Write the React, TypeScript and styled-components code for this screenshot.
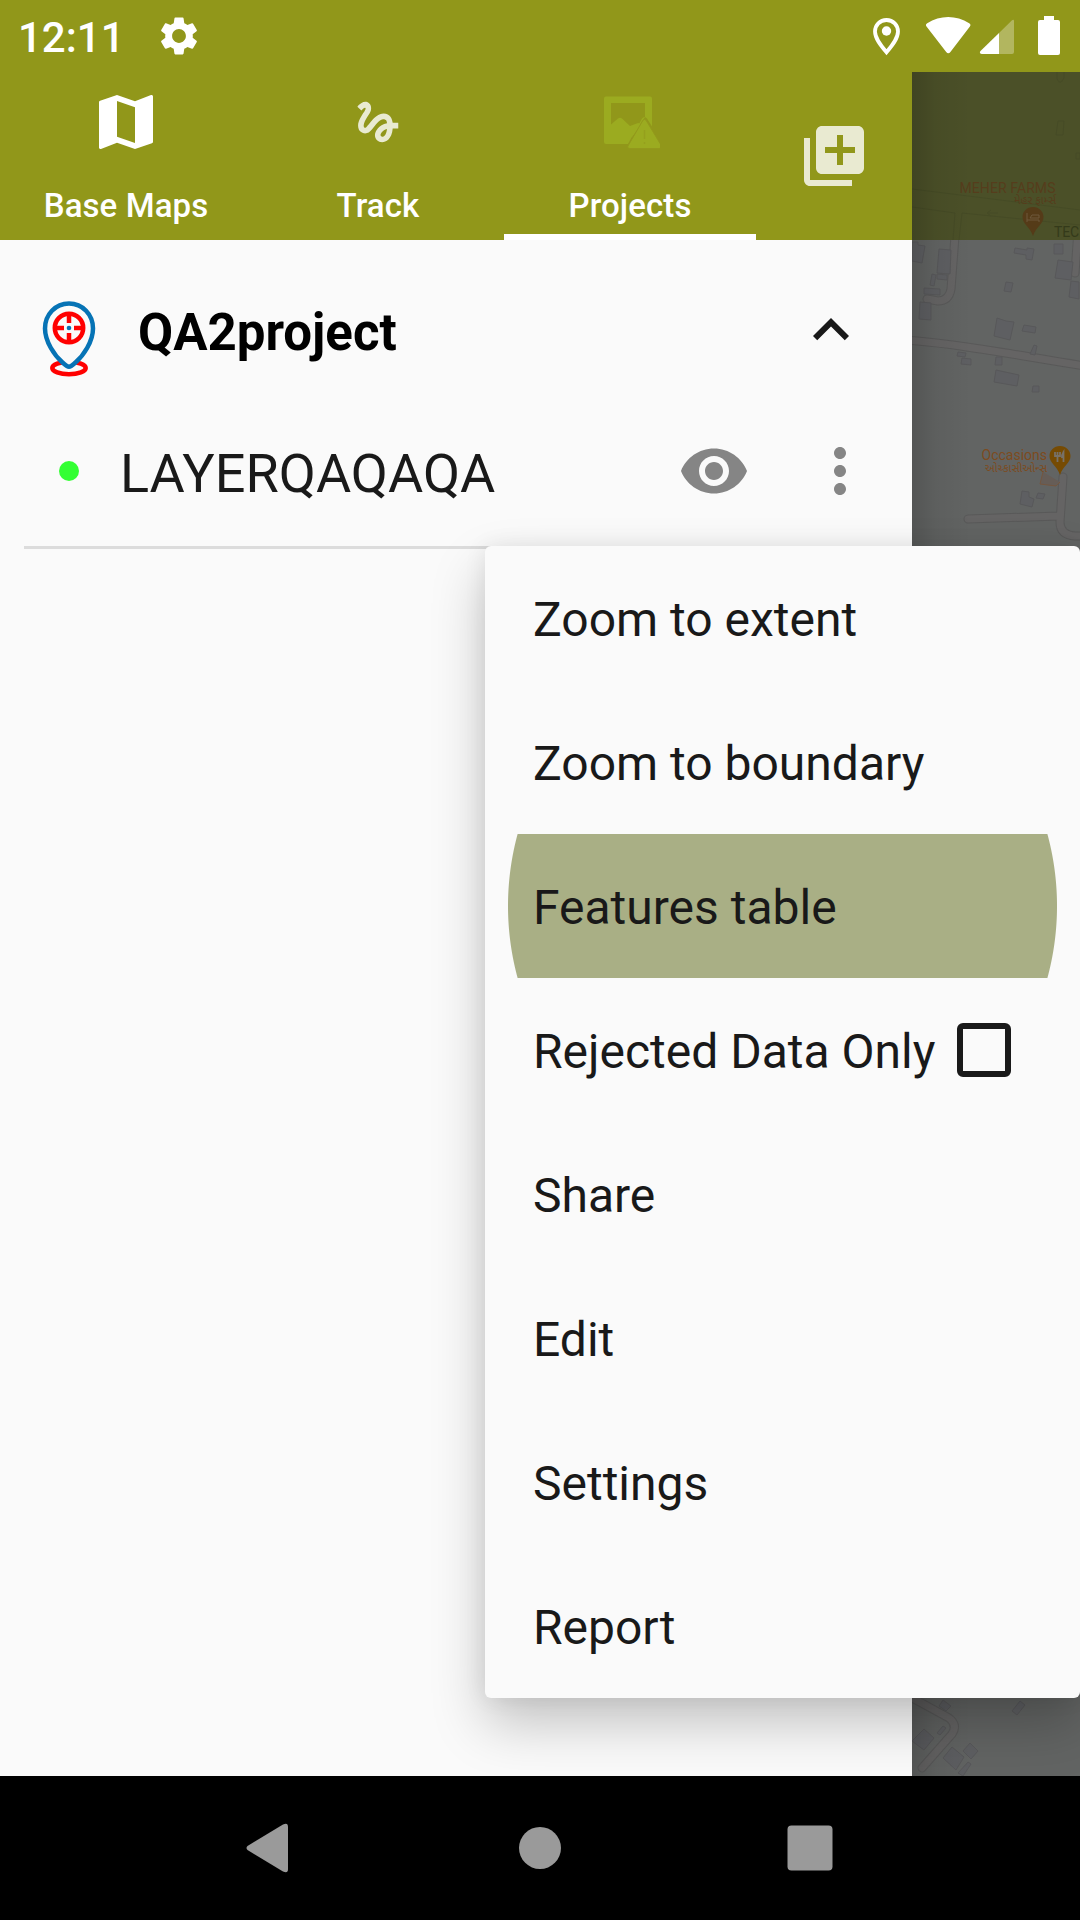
import React from 'react';
import styled, { createGlobalStyle } from 'styled-components';
import { MdSettings, MdMap, MdGesture, MdLibraryAdd, MdExpandLess, MdVisibility, MdMoreVert } from 'react-icons/md';

const GlobalStyle = createGlobalStyle`
  *, *::before, *::after { box-sizing: border-box; }
  body { margin: 0; background: #000; font-family: Roboto, "Noto Sans", sans-serif; }
  svg { display: block; flex: none; }
`;

const Screen = styled.div`
  position: relative;
  width: 1080px;
  height: 1920px;
  display: flex;
  flex-direction: column;
  overflow: hidden;
  background: #fafafa;
`;

const StatusBar = styled.header`
  height: 72px;
  flex: none;
  display: flex;
  align-items: center;
  padding: 0 20px 0 18px;
  background: #91971a;
  color: #fff;
`;

const Clock = styled.span`
  font-size: 42px;
  line-height: 72px;
  font-weight: 500;
  width: 138px;
  padding-top: 3px;
`;

const StatusIcons = styled.div`
  margin-left: auto;
  display: flex;
  align-items: center;
`;

const Body = styled.div`
  flex: 1;
  display: flex;
  min-height: 0;
`;

const Drawer = styled.aside`
  width: 912px;
  flex: none;
  display: flex;
  flex-direction: column;
  background: #fafafa;
`;

const TabBar = styled.nav`
  height: 168px;
  flex: none;
  display: flex;
  background: #91971a;
`;

const Tab = styled.div<{ $active?: boolean }>`
  width: 252px;
  display: flex;
  flex-direction: column;
  align-items: center;
  padding-top: 14px;
  border-bottom: 6px solid ${p => (p.$active ? '#fff' : 'transparent')};
  color: #fff;
`;

const TabIcon = styled.div<{ $faded?: boolean }>`
  height: 72px;
  display: flex;
  align-items: center;
  justify-content: center;
  opacity: ${p => (p.$faded ? 0.8 : 1)};
`;

const TabLabel = styled.span`
  margin-top: 28px;
  font-size: 33px;
  line-height: 39px;
  font-weight: 500;
  letter-spacing: 0.1px;
`;

const AddButton = styled.div`
  flex: 1;
  display: flex;
  align-items: center;
  justify-content: center;
  color: rgba(255, 255, 255, 0.8);
`;

const ProjectRow = styled.div`
  height: 180px;
  display: flex;
  align-items: center;
  padding: 0 45px 0 42px;
`;

const ProjectName = styled.h1`
  flex: 1;
  margin: 6px 0 0 42px;
  font-size: 51px;
  line-height: 60px;
  font-weight: 700;
  color: #000;
`;

const LayerRow = styled.div`
  height: 129px;
  margin: 0 24px;
  display: flex;
  align-items: flex-start;
  padding: 15px 12px 0 35px;
  border-bottom: 3px solid #dcdcdc;
`;

const LayerDot = styled.span`
  width: 20px;
  height: 20px;
  margin: 26px 41px 0 0;
  border-radius: 50%;
  background: #33ff33;
`;

const LayerName = styled.span`
  flex: 1;
  font-size: 54px;
  line-height: 78px;
  color: #191919;
`;

const RowIcon = styled.span<{ $gap?: number }>`
  margin-right: ${p => p.$gap ?? 0}px;
  color: #858585;
`;

const MapPane = styled.main`
  flex: 1;
  background: #626463;
`;

const Menu = styled.ul`
  position: absolute;
  left: 485px;
  top: 546px;
  width: 595px;
  margin: 0;
  padding: 0;
  list-style: none;
  border-radius: 6px;
  background: #fafafa;
  box-shadow: 0 26px 54px rgba(0, 0, 0, 0.22), 0 0 22px rgba(0, 0, 0, 0.08);
`;

const MenuItem = styled.li<{ $pressed?: boolean }>`
  height: 144px;
  display: flex;
  align-items: center;
  padding: 4px 69px 0 48px;
  font-size: 48px;
  line-height: 56px;
  color: #191919;
  background: ${p => (p.$pressed ? 'radial-gradient(circle at 50% 50%, #a9af85 274px, transparent 275px)' : 'none')};
`;

const CheckBox = styled.span`
  width: 54px;
  height: 54px;
  margin: -4px 0 0 auto;
  border: 6px solid #191919;
  border-radius: 6px;
`;

const NavBar = styled.footer`
  height: 144px;
  flex: none;
  display: flex;
  align-items: center;
  justify-content: center;
  background: #000;
`;

const NavSlot = styled.div`
  width: 270px;
  display: flex;
  justify-content: center;
`;

const StatusGlyphs = () => (
  <svg width="192" height="44" viewBox="868 14 192 44" fill="#fff">
    <path d="M886.5 20c6.600 0 11.500 5 11.500 11.500 0 7-5.800 14-11.500 20.800-5.700-6.800-11.500-13.800-11.500-20.800 0-6.500 4.900-11.500 11.500-11.500z" fill="none" stroke="#fff" strokeWidth="3.800" />
    <circle cx="886.500" cy="31" r="4.700" />
    <path d="M926.500 26.500c-1-1.300-.7-2.500.7-3.300 13-8.200 29-8.200 42 0 1.400.8 1.700 2 .7 3.300l-19.500 25.500c-1.200 1.600-3 1.600-4.200 0z" />
    <path d="M1012 20.300c1-1 2-.6 2 .8V52q0 2-2 2H999V33z" opacity=".3" />
    <path d="M999 33v21H982c-2 0-2.800-1.600-1.500-3z" />
    <path d="M1044 16h10v4h4q2 0 2 2v31q0 2-2 2h-18q-2 0-2-2V22q0-2 2-2h4z" />
  </svg>
);

const BrokenImage = () => (
  <svg width="60" height="56" viewBox="600 94 60 56" fill="#9bab20">
    <path fillRule="evenodd" d="M606 96.500h44q2 0 2 2v28l-5-8q-2.500-3-5 0l-14 25.500H606q-2 0-2-2V98.500q0-2 2-2zM611 103v34h21l13-20V103z" />
    <path d="M611 124.500l7-6q2-1.500 4 0l8 7.500 8-3 4 1-10 13h-21z" />
    <path d="M642.500 121q2-3.500 4 0L661 145q1.500 3.500-2 3.500H630q-3.500 0-1.500-3.500z" stroke="#93991c" strokeWidth="1" />
    <path d="M644.500 130v9M644.500 142v2" stroke="#95a01d" strokeWidth="1.500" />
  </svg>
);

const PinBox = styled.span`
  padding-top: 18px;
`;

const ProjectPin = () => (
  <PinBox>
    <svg width="54" height="78" viewBox="42 300 54 78" fill="none">
      <ellipse cx="69" cy="368" rx="16.700" ry="6.300" stroke="#f00" strokeWidth="4.500" />
      <path d="M69 303.500c13.500 0 24 11 24 25 0 13-9.500 27-17.500 34-2.500 2.300-4 4.300-6.500 4.300s-4-2-6.500-4.300C54.500 355.500 45 341.500 45 328.500c0-14 10.500-25 24-25z" stroke="#0673b5" strokeWidth="4.500" fill="#fafafa" />
      <circle cx="69" cy="328" r="14.200" stroke="#f00" strokeWidth="4.500" />
      <path d="M69 314v9M69 333v9M55 328h9M74 328h9" stroke="#f00" strokeWidth="4.500" />
      <circle cx="69" cy="328" r="2.300" fill="#0673b5" />
    </svg>
  </PinBox>
);

const Street = styled.svg`
  font-family: Roboto, "Noto Sans Gujarati", "Noto Sans", sans-serif;
`;

const MapView = () => (
  <Street width="168" height="1704" viewBox="912 72 168 1704">
    <defs>
      <linearGradient id="edge" x1="0" x2="1" y1="0" y2="0">
        <stop offset="0" stopColor="#000" stopOpacity=".15" />
        <stop offset=".4" stopColor="#000" stopOpacity=".05" />
        <stop offset="1" stopColor="#000" stopOpacity="0" />
      </linearGradient>
    </defs>
    <g fill="none" strokeLinecap="round" strokeLinejoin="round">
      <g stroke="#595959" strokeWidth="9">
        <path d="M905 340C960 344 1010 354 1085 366" />
        <path d="M957 210L951 289Q949 301 938 301L927 299" />
        <path d="M1078 230L1075 273" />
        <path d="M1063 477L1060 522Q1060 535 1075 536H1090M968 519L1059 516" />
        <path d="M905 1694L949 1718Q958 1725 952 1734L922 1768" />
      </g>
      <g stroke="#656464" strokeWidth="7">
        <path d="M905 340C960 344 1010 354 1085 366" />
        <path d="M957 210L951 289Q949 301 938 301L927 299" />
        <path d="M1078 230L1075 273" />
        <path d="M1063 477L1060 522Q1060 535 1075 536H1090M968 519L1059 516" />
        <path d="M905 1694L949 1718Q958 1725 952 1734L922 1768" />
      </g>
    </g>
    <g fill="#5e5f62" stroke="#58585a" strokeWidth="1">
      <path d="M912 242l6 0v3l7 1-3 17-10-2zM939 249l12 1-1 24-13-1zM932 274l4 1-2 11-4-1zM937 274l10 1v5l-10-1zM924 288l16 1v6l-16-1zM920 302l11 1v17l-12-1zM1015 248l12 2v-2l7 1-2 11-6-1v-4l-12-2zM1054 244h9v10h-9zM1058 260l15 2-2 18-16-2zM1071 281l8 1v17l-10-2zM1006 282l7 1-2 9-7-1zM997 318l9 3 8 1-4 18-16-4zM1024 325l12 2-1 6-13-2zM1034 345l3 1-2 9-5-1zM958 352l8 1-1 4-8-1zM962 358l9 1v6l-10-1zM996 357h6v8h-7zM996 370l23 5-2 11-23-4zM1033 386h6v6h-7zM1022 491l7 1v5l5 2-2 8-12-3zM1038 493l7 1-2 5-7-1zM943 1700l8 6-5 5-7-5zM1020 1701l5 4-8 10-5-4zM924 1729l10 9-10 12-12-9zM943 1726l3 2-6 7-3-2zM952 1747l12 10-8 13-13-12zM970 1743l8 8-7 8-8-8zM968 1762l3 2-8 12-5-3z" />
    </g>
    <path d="M912 72h168v168H912z" fill="#4b5028" />
    <g stroke="#464b26" fill="none" strokeWidth="1">
      <path d="M912 189L1080 210M912 207l43 6-2 27M962 213l-3 27M962 213l118 12M1057 72v7q3 7 7-1v-6M1058 121h6l-1 14h-7zM1076 153h4v6h-4zM987 213h11M987 213l4-3M987 213l4 3" />
    </g>
    <text x="959.500" y="192.500" fontSize="14" textLength="96" fill="#563d1c">MEHER FARMS</text>
    <text x="1014" y="204" fontSize="11" textLength="42" fill="#563d1c">મેહર ફાર્મ્સ</text>
    <path d="M1033 207c6 0 10.500 4.500 10.500 10 0 7-7 9-10.500 19-3.500-10-10.500-12-10.500-19 0-5.500 4.500-10 10.500-10z" fill="#553b18" />
    <path d="M1027 213v9M1027 220h12v2M1030 218h9v-3h-7z" stroke="#6e593b" fill="none" />
    <text x="1054" y="236.500" fontSize="14" textLength="25" fill="#343a1a">TEC</text>
    <g fill="#7d4b1e">
      <text x="981.500" y="460" fontSize="14" textLength="65.500">Occasions</text>
      <text x="985" y="472" fontSize="11" textLength="62">ઓચ્કાસીઓન્સ</text>
    </g>
    <path d="M1043 472l-3 12 16 2 4-4" fill="#665d57" stroke="#74563f" />
    <path d="M1060 446c6 0 10.500 4.500 10.500 10 0 7-7 9-10.500 19-3.500-10-10.500-12-10.500-19 0-5.500 4.500-10 10.500-10z" fill="#764b03" />
    <path d="M1057.500 452v10M1055 452v4h5v-4M1063.500 462v-10q-2 3-1.500 6" stroke="#777168" strokeWidth="1.800" fill="none" />
    <path d="M912 72h60v1704h-60z" fill="url(#edge)" />
  </Street>
);

export default function App() {
  return (
    <>
      <GlobalStyle />
      <Screen>
        <StatusBar>
          <Clock>12:11</Clock>
          <MdSettings size={46} />
          <StatusIcons><StatusGlyphs /></StatusIcons>
        </StatusBar>
        <Body>
          <Drawer>
            <TabBar>
              <Tab><TabIcon><MdMap size={72} /></TabIcon><TabLabel>Base Maps</TabLabel></Tab>
              <Tab><TabIcon $faded><MdGesture size={54} /></TabIcon><TabLabel>Track</TabLabel></Tab>
              <Tab $active><TabIcon><BrokenImage /></TabIcon><TabLabel>Projects</TabLabel></Tab>
              <AddButton><MdLibraryAdd size={72} /></AddButton>
            </TabBar>
            <ProjectRow>
              <ProjectPin />
              <ProjectName>QA2project</ProjectName>
              <MdExpandLess size={72} color="#191919" />
            </ProjectRow>
            <LayerRow>
              <LayerDot />
              <LayerName>LAYERQAQAQA</LayerName>
              <RowIcon $gap={54}><MdVisibility size={72} /></RowIcon>
              <RowIcon><MdMoreVert size={72} /></RowIcon>
            </LayerRow>
          </Drawer>
          <MapPane><MapView /></MapPane>
        </Body>
        <NavBar>
          <NavSlot>
            <svg width="48" height="50" viewBox="0 0 48 50" fill="#9a9a9a"><path d="M1.500 23L37 1.500Q42 -1 42 4V46Q42 51 37 48.500L1.500 27Q-.5 25 1.500 23z" /></svg>
          </NavSlot>
          <NavSlot>
            <svg width="42" height="42" fill="#9a9a9a"><circle cx="21" cy="21" r="21" /></svg>
          </NavSlot>
          <NavSlot>
            <svg width="46" height="46" fill="#9a9a9a"><rect x=".5" y=".5" width="45" height="45" rx="4" /></svg>
          </NavSlot>
        </NavBar>
        <Menu>
          <MenuItem>Zoom to extent</MenuItem>
          <MenuItem>Zoom to boundary</MenuItem>
          <MenuItem $pressed>Features table</MenuItem>
          <MenuItem>Rejected Data Only<CheckBox /></MenuItem>
          <MenuItem>Share</MenuItem>
          <MenuItem>Edit</MenuItem>
          <MenuItem>Settings</MenuItem>
          <MenuItem>Report</MenuItem>
        </Menu>
      </Screen>
    </>
  );
}
